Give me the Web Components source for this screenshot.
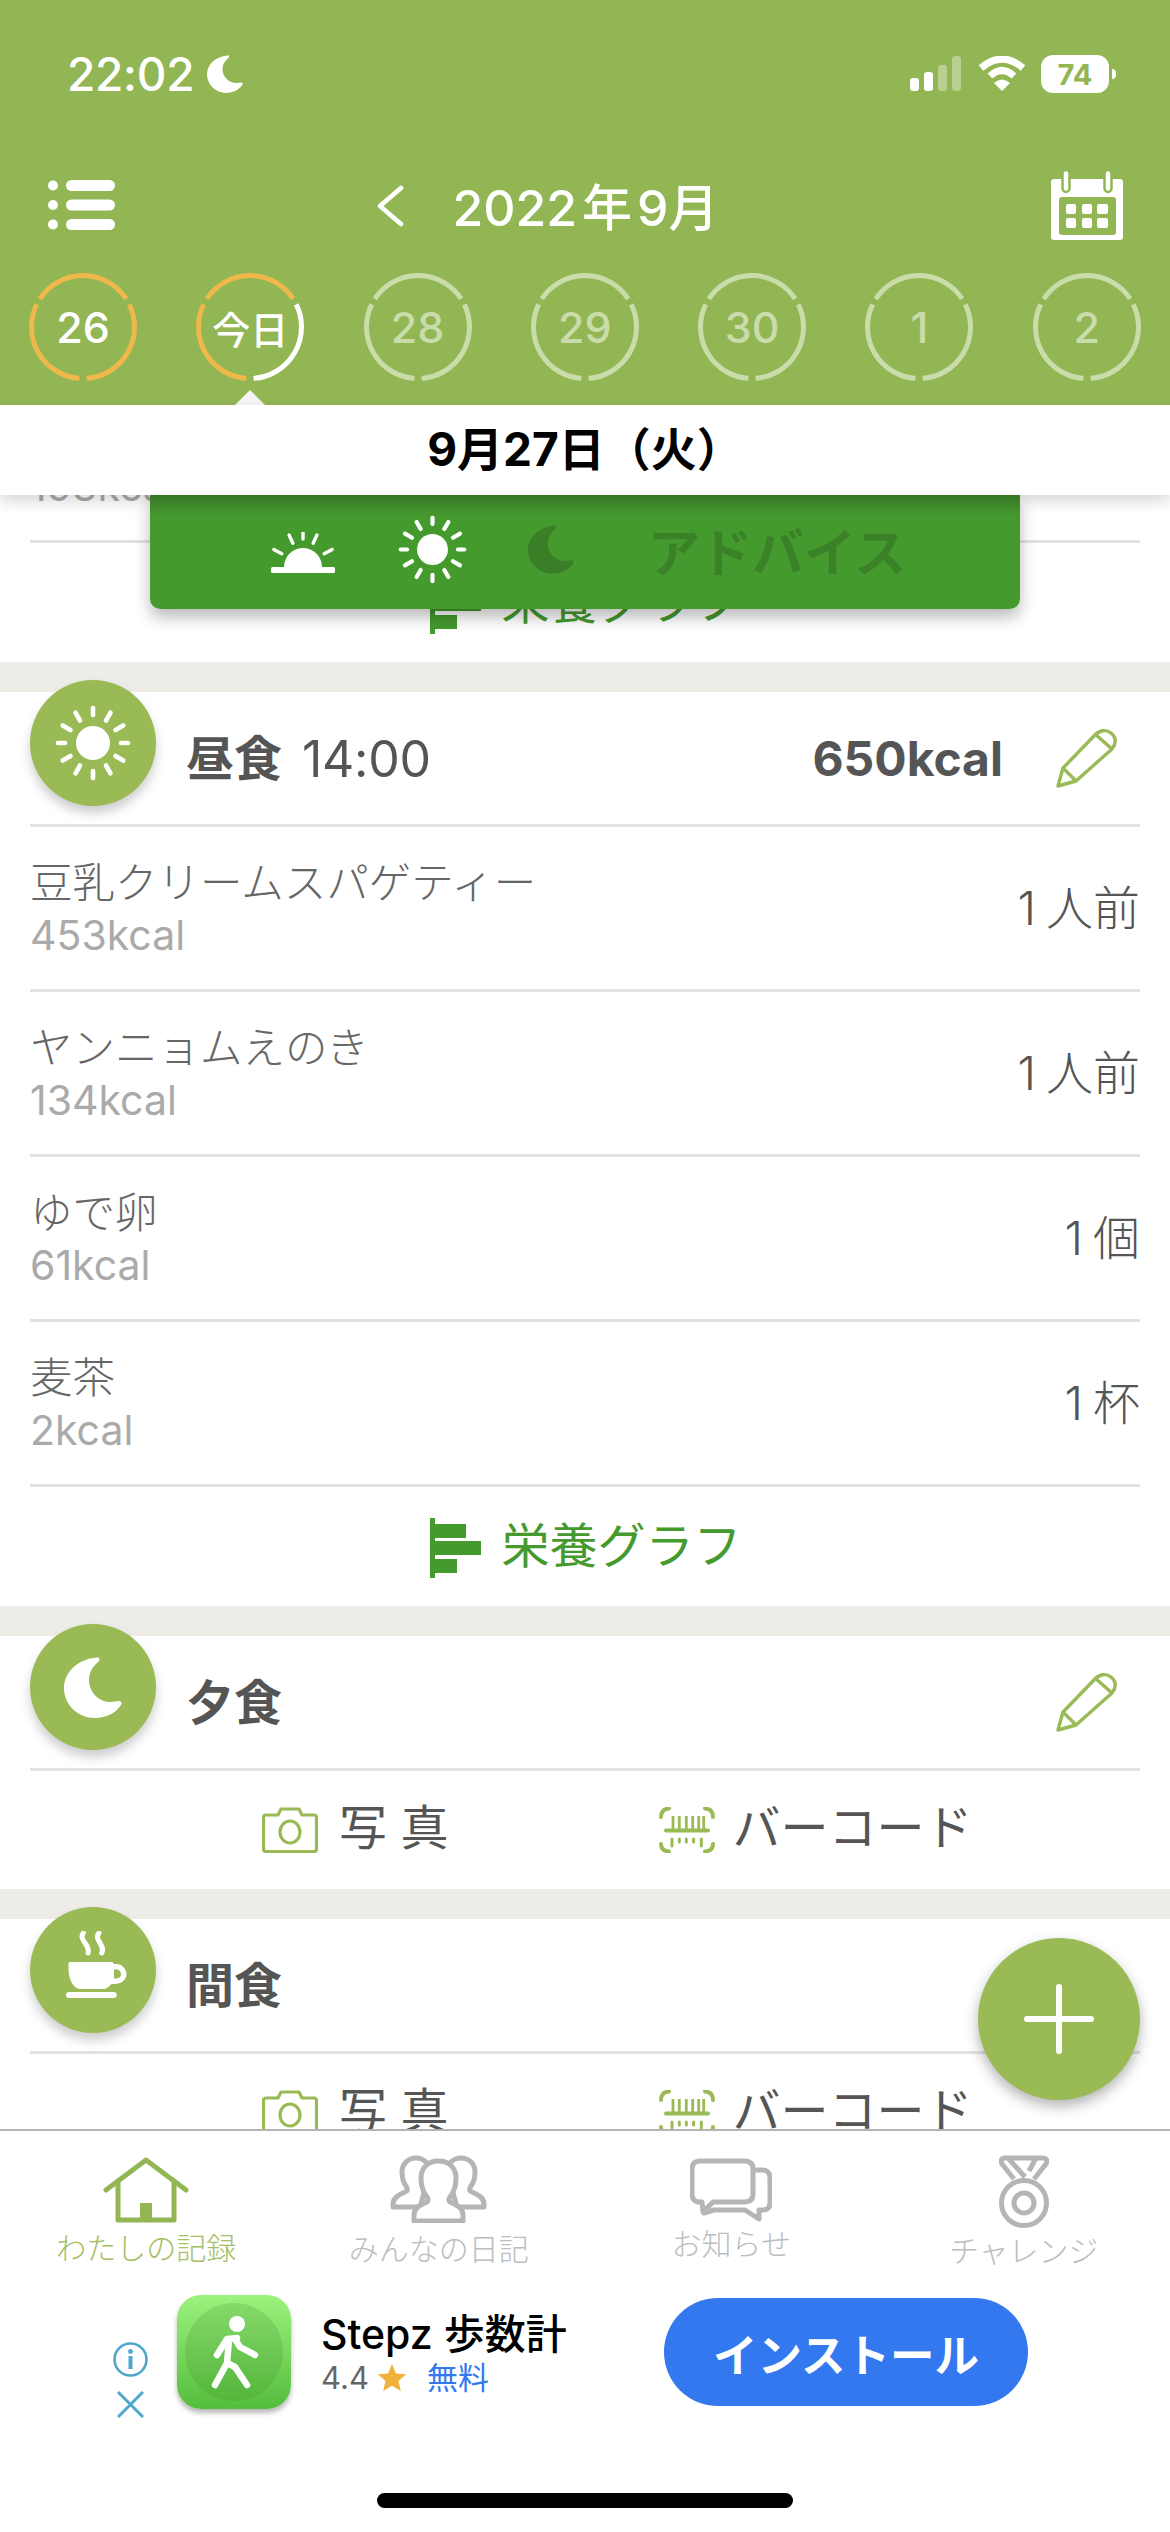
<!DOCTYPE html>
<html lang="ja">
<head>
<meta charset="utf-8">
<title>わたしの記録</title>
<style>
	html, body { margin: 0; padding: 0; }
	body {
		width: 1170px;
		height: 2532px;
		overflow: hidden;
		display: flex;
		flex-direction: column;
		background: #ffffff;
		font-family: Inter, "Noto Sans CJK JP", sans-serif;
		color: #555555;
	}
</style>
</head>
<body>
	<app-header></app-header>
	<date-bar>9月27日（火）</date-bar>
	<meal-view>
		<meal-section>
			<food-row name="" kcal="193kcal" qty=""></food-row>
			<nutrition-link></nutrition-link>
		</meal-section>
		<meal-section icon="sun" title-text="昼食" time="14:00" total="650kcal">
			<food-row name="豆乳クリームスパゲティー" kcal="453kcal" qty="1人前"></food-row>
			<food-row name="ヤンニョムえのき" kcal="134kcal" qty="1人前"></food-row>
			<food-row name="ゆで卵" kcal="61kcal" qty="1個"></food-row>
			<food-row name="麦茶" kcal="2kcal" qty="1杯"></food-row>
			<nutrition-link></nutrition-link>
		</meal-section>
		<meal-section icon="moon" title-text="夕食">
			<capture-row></capture-row>
		</meal-section>
		<meal-section icon="cup" title-text="間食" no-edit>
			<capture-row></capture-row>
		</meal-section>
	</meal-view>
	<tab-bar></tab-bar>
	<ad-banner></ad-banner>
	<home-indicator></home-indicator>

<script>
	const GREEN = '#9aba55';

	// rays round a centre, used by the sun and the sunrise
	function rays(angles, r1, r2, width, cx = 0, cy = 0) {
		return angles.map((a) => {
			const rad = a * Math.PI / 180;
			const r0 = a % 90 === 0 ? r1 + 2 : r1;
			return `<line x1="${cx + Math.sin(rad) * r0}" y1="${cy - Math.cos(rad) * r0}" x2="${cx + Math.sin(rad) * r2}" y2="${cy - Math.cos(rad) * r2}" stroke-width="${width}" stroke-linecap="round"/>`;
		}).join('');
	}

	const MOON_PATH = 'M33 0.500C35 0 37 3 34 5C28 10 25 16 25 23C25 35 35 45 46 45C49 45 52 44 55 44C58 44 58 47 57 48C52 56 42 61 31 61C14 61 0 48 0 31C0 15 14 2 33 0.500Z';
	const SUN_BODY = `<circle r="17" stroke="none"/>${rays([0, 30, 60, 90, 120, 150, 180, 210, 240, 270, 300, 330], 26, 35, 4.6)}`;

	const ICONS = {
		sun: `<svg viewBox="-38 -38 76 76" width="76" height="76" stroke="#fff" fill="#fff">${SUN_BODY}</svg>`,
		sunSmall: `<svg viewBox="-38 -38 76 76" width="69" height="69" stroke="#fff" fill="#fff">${SUN_BODY}</svg>`,
		sunrise: `<svg viewBox="0 0 66 42" width="66" height="42" stroke="#fff" fill="#fff"><path d="M14 35A19 19 0 0 1 52 35Z" stroke="none"/><rect x="1" y="35" width="64" height="6" rx="1.500" stroke="none"/>${rays([0, 25, -25, 62, -62], 24, 33, 3.4, 33, 33)}</svg>`,
		moon: `<svg viewBox="0 0 58 61" width="58" height="61"><path d="${MOON_PATH}" fill="#fff"/></svg>`,
		moonDark: `<svg viewBox="0 0 58 61" width="46" height="49"><path d="${MOON_PATH}" fill="#3a7f28"/></svg>`,
		cup: `<svg viewBox="0 0 61 67" width="61" height="67" fill="#fff" style="margin:-11px 0 0 7px"><path d="M17.300 2C12 9 25 14 22 22M33 2C27 9 40 14 35.700 22" fill="none" stroke="#fff" stroke-width="5" stroke-linecap="round"/><path fill-rule="evenodd" d="M4 31H46C47 31 47.500 32 47.500 33H50C56 33 60.500 38 60.500 43C60.500 49 55 53 49 53H45.500C43 56 40 58 37 58H14C8 58 2.500 49 2.500 38V32.500C2.500 31.500 3 31 4 31ZM48 38.500V47.500H50C53 47.500 55 45.500 55 43C55 40.500 53 38.500 50 38.500Z"/><rect x="0" y="61" width="50.700" height="6" rx="3"/></svg>`,
		pencil: `<svg viewBox="0 0 62 60" width="62" height="60" fill="none" stroke="${GREEN}" stroke-width="3.400" stroke-linejoin="round"><path d="M7 40L38 8C43 2 50 1 55 5C60 9 61 15 56 21L20 53L2 58Z"/><path d="M7 40L20 53M39 6L56 21"/></svg>`,
		camera: `<svg viewBox="0 0 56 46" width="56" height="46" fill="none" stroke="${GREEN}" stroke-width="3.200" stroke-linejoin="round"><path d="M4 8H16L19 2H37L40 8H52C53.500 8 54.500 9 54.500 10.500V42C54.500 43.500 53.500 44.500 52 44.500H4C2.500 44.500 1.500 43.500 1.500 42V10.500C1.500 9 2.500 8 4 8Z"/><ellipse cx="28" cy="25" rx="10" ry="11"/></svg>`,
		barcode: `<svg viewBox="0 0 56 46" width="56" height="46" fill="none" stroke="${GREEN}" stroke-linecap="round"><path d="M2 10Q2 2 10 1.500M46 1.500Q54 2 54 10M2 37Q2 44 10 44.500M54 37Q54 44 46 44.500" stroke-width="4"/><path d="M14 9V22M20.300 9V22M27.300 9V22M33.700 9V22M39.700 9V22M44.700 9V22" stroke-width="2.800" stroke-linecap="butt"/><rect x="5" y="21.500" width="46" height="4" rx="2" fill="${GREEN}" stroke="none"/><path d="M13 32V39M42.300 32V39M20.300 32V35M27.300 32V35M34.600 32V35" stroke-width="3"/></svg>`,
		graph: `<svg viewBox="0 0 51 60" width="51" height="60" fill="#459a2e"><rect width="5" height="60"/><rect x="5" y="6" width="31" height="14"/><rect x="5" y="23" width="46" height="14"/><rect x="5" y="41" width="22" height="14"/></svg>`,
		list: `<svg viewBox="0 0 67 50" width="67" height="50" fill="#fff"><circle cx="5" cy="5.500" r="5"/><circle cx="5" cy="25" r="5"/><circle cx="5" cy="44.500" r="5"/><rect x="18" y="0" width="49" height="11" rx="5.500"/><rect x="18" y="19.500" width="49" height="11" rx="5.500"/><rect x="18" y="39" width="49" height="11" rx="5.500"/></svg>`,
		chevron: `<svg viewBox="0 0 28 42" width="28" height="42" fill="none" stroke="#fff" stroke-width="4.600" stroke-linecap="round" stroke-linejoin="round"><path d="M25 3L4 21L25 39"/></svg>`,
		calendar: `<svg viewBox="0 0 72 69" width="72" height="69"><path d="M3 8H69C71 8 72 9 72 11V66C72 68 71 69 69 69H3C1 69 0 68 0 66V11C0 9 1 8 3 8Z" fill="#fff"/><rect x="8" y="26" width="57" height="38" rx="3" fill="#93b655"/><g fill="#fff"><rect x="15" y="33" width="10" height="10" rx="2"/><rect x="31" y="33" width="10" height="10" rx="2"/><rect x="46" y="33" width="11" height="10" rx="2"/><rect x="15" y="47" width="10" height="10" rx="2"/><rect x="31" y="47" width="10" height="10" rx="2"/><rect x="46" y="47" width="11" height="10" rx="2"/></g><g fill="#fff" stroke="#93b655" stroke-width="2.500"><rect x="11.500" y="-1" width="7" height="22" rx="3.500"/><rect x="53.500" y="-1" width="7" height="22" rx="3.500"/></g></svg>`,
		home: `<svg viewBox="0 0 86 66" width="86" height="66" fill="none" stroke="#93b655" stroke-width="5" stroke-linecap="round" stroke-linejoin="round"><path d="M3 33L43 3L83 33"/><path d="M15 24V63H71V24"/><rect x="37" y="46" width="12" height="18" fill="#93b655" stroke="none"/></svg>`,
		people: `<svg viewBox="0 0 97 68" width="97" height="68" fill="#fff" stroke="#b5b5b5" stroke-width="5" stroke-linejoin="round"><path d="M3 52V49C3 43 8 40 15 37C18 36 18 34 16 31C13 27 12 23 12 17C12 9 18 3 26 3C34 3 40 9 40 17C40 23 39 27 36 31L30 52Z"/><path d="M94 52V49C94 43 89 40 82 37C79 36 79 34 81 31C84 27 85 23 85 17C85 9 79 3 71 3C63 3 57 9 57 17C57 23 58 27 61 31L67 52Z"/><path d="M24 66V60C24 54 30 50 35 48C38 47 39 45 37 42C33 37 31 31 31 23C31 13 38 6 48.500 6C59 6 66 13 66 23C66 31 64 37 60 42C58 45 59 47 62 48C67 50 73 54 73 60V66Z"/></svg>`,
		chat: `<svg viewBox="0 0 82 64" width="82" height="64" fill="none" stroke="#b5b5b5" stroke-width="5" stroke-linejoin="round" stroke-linecap="round"><path d="M62 12H72C77 12 80 15 80 20V45C80 50 77 52 72 52H69L69 61L55 52H24L14 55"/><path d="M10 3H54C60 3 63 6 63 11V36C63 41 60 44 54 44H23L13 54L12 44H10C5 44 2 41 2 36V11C2 6 5 3 10 3Z" fill="#fff"/></svg>`,
		medal: `<svg viewBox="0 0 50 73" width="50" height="73" fill="none" stroke="#b5b5b5" stroke-width="5" stroke-linejoin="round"><path d="M15 24L3 9C1 5 3 3 6 3H44C47 3 49 5 47 9L35 24"/><path d="M9 3L26 22M30 16L37 3"/><circle cx="25" cy="48" r="22.500"/><circle cx="25" cy="48" r="10"/></svg>`,
		walker: `<svg viewBox="0 0 114 114" width="114" height="114"><defs><linearGradient id="bg" x1="0" y1="0" x2="0" y2="1"><stop offset="0" stop-color="#9df27d"/><stop offset="1" stop-color="#54bd3c"/></linearGradient><linearGradient id="disc" x1="0" y1="0" x2="0" y2="1"><stop offset="0" stop-color="#86d96a"/><stop offset="1" stop-color="#54b53c"/></linearGradient></defs><rect width="114" height="114" rx="24" fill="url(#bg)"/><circle cx="57" cy="57" r="49" fill="url(#disc)"/><circle cx="60" cy="29" r="8" fill="#fff"/><path d="M60 43L50 44L40 60M58 44L63 52L78 60M52 45L50 68L38 90M50 68L58 72L70 90" fill="none" stroke="#fff" stroke-width="6.500" stroke-linecap="round" stroke-linejoin="round"/></svg>`,
		info: `<svg viewBox="0 0 35 35" width="35" height="35" fill="none" stroke="#4fa8cb" stroke-width="2.600"><circle cx="17.500" cy="17.500" r="16"/><circle cx="17.500" cy="9.500" r="2.400" fill="#4fa8cb" stroke="none"/><rect x="15.500" y="14" width="4" height="13" fill="#4fa8cb" stroke="none"/></svg>`,
		close: `<svg viewBox="0 0 27 27" width="27" height="27" stroke="#4fa8cb" stroke-width="3"><path d="M1 1L26 26M26 1L1 26"/></svg>`,
		star: `<svg viewBox="0 0 28 27" width="28" height="27"><path d="M14 0L18 9.500L28 10.300L20.500 17L22.800 27L14 21.700L5.200 27L7.500 17L0 10.300L10 9.500Z" fill="#efb23c"/></svg>`
	};

	class AppIcon extends HTMLElement {
		constructor() {
			super();
			this.attachShadow({ mode: 'open' });
		}

		connectedCallback() {
			this.shadowRoot.innerHTML = `
				<style>
					:host { display: inline-flex; flex: none; line-height: 0; }
				</style>
				${ICONS[this.getAttribute('name')]}
			`;
		}
	}

	class AppHeader extends HTMLElement {
		constructor() {
			super();
			this.attachShadow({ mode: 'open' });
			this.shadowRoot.innerHTML = `
				<style>
					:host {
						display: block;
						height: 405px;
						flex: none;
						background: #93b655;
						color: #fff;
						position: relative;
					}
					.status {
						display: flex;
						align-items: center;
						justify-content: space-between;
						height: 50px;
						padding: 49px 55px 0 67px;
					}
					.time {
						display: flex;
						align-items: center;
						gap: 13px;
						font-size: 46px;
						font-weight: 500;
						letter-spacing: -0.300px;
					}
					.indicators { display: flex; align-items: center; margin-right: -1px; }
					.nav {
						display: grid;
						grid-template-columns: 1fr auto 1fr;
						align-items: center;
						height: 80px;
						margin-top: 66px;
						padding: 0 47px 0 48px;
					}
					.nav .cal { justify-self: end; }
					.title {
						display: flex;
						align-items: center;
						font-size: 50px;
						line-height: 60px;
						font-weight: 500;
						padding-top: 5px;
					}
					.title app-icon { margin-left: -76px; margin-right: 48px; margin-top: -4px; }
					.gap { margin: 0 5px; }
					.battery {
						width: 68px;
						height: 38px;
						border-radius: 12px;
						background: #fff;
						color: #93b655;
						font-size: 29px;
						font-weight: 700;
						display: flex;
						align-items: center;
						justify-content: center;
						margin-left: 15px;
					}
					.nub { width: 4px; height: 10px; margin-left: 3px; background: #fff; border-radius: 0 5px 5px 0; }
				</style>
				<div class="status">
					<div class="time">22:02 <svg viewBox="0 0 58 61" width="36" height="38"><path d="${MOON_PATH}" fill="#fff"/></svg></div>
					<div class="indicators">
						<svg viewBox="0 0 116 36" width="116" height="36">
							<rect x="0" y="22" width="9" height="13" rx="3" fill="#fff"/>
							<rect x="14" y="16" width="9" height="19" rx="3" fill="#fff"/>
							<rect x="28" y="9" width="9" height="26" rx="3" fill="#fff" opacity=".35"/>
							<rect x="42" y="0" width="9" height="35" rx="3" fill="#fff" opacity=".35"/>
							<path d="M71 12Q92 -6 113 12M80 20Q92 9 104 20" fill="none" stroke="#fff" stroke-width="7"/>
							<path d="M84 27Q92 20 100 27L92 35Z" fill="#fff"/>
						</svg>
						<div class="battery">74</div>
						<div class="nub"></div>
					</div>
				</div>
				<div class="nav">
					<app-icon name="list"></app-icon>
					<div class="title"><app-icon name="chevron"></app-icon>2022<span class="gap">年</span>9月</div>
					<app-icon class="cal" name="calendar"></app-icon>
				</div>
				<day-strip></day-strip>
			`;
		}
	}

	class DayStrip extends HTMLElement {
		constructor() {
			super();
			this.attachShadow({ mode: 'open' });
			const O = '#efb84a', W = '#ffffff', D = '#cadcaa';
			const days = [
				['26', O, O, O, false],
				['今日', O, W, O, true],
				['28', D, D, D, false],
				['29', D, D, D, false],
				['30', D, D, D, false],
				['1', D, D, D, false],
				['2', D, D, D, false]
			];
			this.shadowRoot.innerHTML = `
				<style>
					:host {
						display: flex;
						gap: 59.300px;
						margin-top: 28px;
						padding-left: 29px;
					}
				</style>
				${days.map((d) => `<day-ring label="${d[0]}" top="${d[1]}" right="${d[2]}" left="${d[3]}" ${d[4] ? 'selected' : ''} ${d[1] === D ? 'dim' : ''}></day-ring>`).join('')}
			`;
		}
	}

	class DayRing extends HTMLElement {
		constructor() {
			super();
			this.attachShadow({ mode: 'open' });
		}

		arc(from, to, colour) {
			const r = 51.500;
			const pt = (a) => {
				const rad = a * Math.PI / 180;
				return `${54 + Math.sin(rad) * r} ${54 - Math.cos(rad) * r}`;
			};
			return `<path d="M${pt(from)}A${r} ${r} 0 0 1 ${pt(to)}" fill="none" stroke="${colour}" stroke-width="5"/>`;
		}

		connectedCallback() {
			const dim = this.hasAttribute('dim');
			const selected = this.hasAttribute('selected');
			this.shadowRoot.innerHTML = `
				<style>
					:host {
						display: grid;
						place-items: center;
						width: 108px;
						height: 108px;
						flex: none;
						position: relative;
						font-size: ${selected ? 38 : 43}px;
						font-weight: 500;
						color: ${dim ? '#cadcaa' : '#ffffff'};
					}
					svg { position: absolute; inset: 0; }
					.pointer {
						position: absolute;
						left: 39px;
						bottom: -24px;
						width: 0;
						height: 0;
						border-left: 15px solid transparent;
						border-right: 15px solid transparent;
						border-bottom: 15px solid #f6f6f6;
					}
				</style>
				<svg viewBox="0 0 108 108" width="108" height="108">
					${this.arc(-57, 57, this.getAttribute('top'))}
					${this.arc(64, 176, this.getAttribute('right'))}
					${this.arc(184, 296, this.getAttribute('left'))}
				</svg>
				<span>${this.getAttribute('label')}</span>
				${selected ? '<div class="pointer"></div>' : ''}
			`;
		}
	}

	class DateBar extends HTMLElement {
		constructor() {
			super();
			this.attachShadow({ mode: 'open' });
			this.shadowRoot.innerHTML = `
				<style>
					:host {
						display: flex;
						align-items: center;
						justify-content: center;
						height: 90px;
						flex: none;
						box-sizing: border-box;
						padding-bottom: 8px;
						background: #fff;
						color: #000;
						font-size: 46px;
						font-weight: 700;
						box-shadow: 0 6px 14px rgba(0, 0, 0, 0.16);
						position: relative;
						z-index: 3;
					}
				</style>
				<slot></slot>
			`;
		}
	}

	class MealView extends HTMLElement {
		constructor() {
			super();
			this.attachShadow({ mode: 'open' });
			this.shadowRoot.innerHTML = `
				<style>
					:host {
						display: block;
						height: 1634px;
						flex: none;
						position: relative;
						overflow: hidden;
						background: #eeece6;
					}
					/* the list is scrolled, its first section runs under the date bar */
					.list { display: flex; flex-direction: column; gap: 30px; margin-top: -117px; }
					.advice {
						position: absolute;
						top: 0;
						left: 150px;
						width: 870px;
						height: 114px;
						box-sizing: border-box;
						display: flex;
						align-items: center;
						padding-left: 120px;
						background: linear-gradient(#3f862a 0, #459a2e 22px);
						border-radius: 0 0 10px 10px;
						box-shadow: 0 8px 16px rgba(0, 0, 0, 0.28);
						z-index: 2;
					}
					.advice .sunrise { margin-top: 2px; }
					.advice .sun { margin-left: 62px; margin-top: -6px; }
					.advice .moon { margin-left: 61px; margin-top: -6px; }
					.advice span {
						margin-left: 74px;
						margin-top: -6px;
						font-size: 52px;
						font-weight: 700;
						color: #3b8128;
						white-space: nowrap;
					}
					.fab {
						position: absolute;
						left: 978px;
						top: 1443px;
						width: 162px;
						height: 162px;
						border-radius: 50%;
						background: ${GREEN};
						box-shadow: 0 6px 14px rgba(0, 0, 0, 0.3);
						z-index: 2;
						display: grid;
						place-items: center;
					}
				</style>
				<div class="list"><slot></slot></div>
				<div class="advice">
					<app-icon class="sunrise" name="sunrise"></app-icon>
					<app-icon class="sun" name="sunSmall"></app-icon>
					<app-icon class="moon" name="moonDark"></app-icon>
					<span>アドバイス</span>
				</div>
				<div class="fab">
					<svg viewBox="0 0 70 70" width="70" height="70" fill="#fff"><rect x="32" y="0" width="6" height="70" rx="3"/><rect x="0" y="32" width="70" height="6" rx="3"/></svg>
				</div>
			`;
		}
	}

	class MealSection extends HTMLElement {
		constructor() {
			super();
			this.attachShadow({ mode: 'open' });
		}

		connectedCallback() {
			const icon = this.getAttribute('icon');
			const time = this.getAttribute('time');
			const total = this.getAttribute('total');
			const head = icon ? `
				<div class="head">
					<div class="avatar"><app-icon name="${icon}"></app-icon></div>
					<div class="name">${this.getAttribute('title-text')}</div>
					${time ? `<div class="time">${time}</div>` : ''}
					<div class="total">${total || ''}</div>
					${this.hasAttribute('no-edit') ? '' : '<app-icon class="edit" name="pencil"></app-icon>'}
				</div>
			` : '';
			this.shadowRoot.innerHTML = `
				<style>
					:host { display: block; background: #fff; position: relative; }
					.head {
						display: flex;
						align-items: center;
						box-sizing: border-box;
						height: 135px;
						margin: 0 30px;
						padding-top: 2px;
						border-bottom: 3px solid #e2e2e2;
						color: #555;
					}
					.avatar {
						width: 126px;
						height: 126px;
						flex: none;
						align-self: flex-start;
						margin-top: -14px;
						border-radius: 50%;
						background: ${GREEN};
						box-shadow: 0 7px 11px rgba(0, 0, 0, 0.2);
						display: grid;
						place-items: center;
					}
					.name { margin-left: 30px; font-size: 48px; line-height: 60px; font-weight: 700; }
					.time { margin-left: 20px; font-size: 50px; line-height: 60px; font-weight: 400; letter-spacing: -0.300px; }
					.total { margin-left: auto; font-size: 48px; line-height: 60px; font-weight: 700; }
					.edit { margin-left: 53px; margin-right: 22px; margin-top: -2px; }
				</style>
				${head}
				<slot></slot>
			`;
		}
	}

	class FoodRow extends HTMLElement {
		constructor() {
			super();
			this.attachShadow({ mode: 'open' });
		}

		connectedCallback() {
			const qty = this.getAttribute('qty');
			this.shadowRoot.innerHTML = `
				<style>
					:host {
						display: flex;
						justify-content: space-between;
						align-items: center;
						box-sizing: border-box;
						height: 165px;
						margin: 0 30px;
						border-bottom: 3px solid #e2e2e2;
					}
					.name { font-size: 42.500px; line-height: 56px; min-height: 56px; margin-top: -2px; color: #666; font-weight: 300; white-space: nowrap; }
					.kcal { font-size: 41px; line-height: 50px; color: #aaa; margin-top: -1px; }
					.qty { font-size: 47px; line-height: 60px; color: #555; font-weight: 300; }
					.qty span { margin-right: 10px; }
				</style>
				<div>
					<div class="name">${this.getAttribute('name')}</div>
					<div class="kcal">${this.getAttribute('kcal')}</div>
				</div>
				<div class="qty"><span>${qty.slice(0, 1)}</span>${qty.slice(1)}</div>
			`;
		}
	}

	class NutritionLink extends HTMLElement {
		constructor() {
			super();
			this.attachShadow({ mode: 'open' });
			this.shadowRoot.innerHTML = `
				<style>
					:host {
						display: flex;
						align-items: center;
						justify-content: center;
						gap: 20px;
						height: 119px;
						padding-left: 2px;
						font-size: 48px;
						color: #459a2e;
					}
					app-icon { margin-top: 3px; }
					span { line-height: 60px; margin-top: -2px; }
				</style>
				<app-icon name="graph"></app-icon>
				<span>栄養グラフ</span>
			`;
		}
	}

	class CaptureRow extends HTMLElement {
		constructor() {
			super();
			this.attachShadow({ mode: 'open' });
			this.shadowRoot.innerHTML = `
				<style>
					:host {
						display: flex;
						align-items: center;
						height: 118px;
						padding-left: 262px;
						font-size: 48px;
						color: #555;
					}
					.item { display: flex; align-items: center; gap: 21px; }
					.item + .item { margin-left: 210px; gap: 18px; }
					span { line-height: 60px; margin-top: -4px; }
				</style>
				<div class="item"><app-icon name="camera"></app-icon><span>写 真</span></div>
				<div class="item"><app-icon name="barcode"></app-icon><span>バーコード</span></div>
			`;
		}
	}

	class TabBar extends HTMLElement {
		constructor() {
			super();
			this.attachShadow({ mode: 'open' });
			const tabs = [
				['home', 'わたしの記録', 26, 65, 11, true],
				['people', 'みんなの日記', 24, 68, 11, false],
				['chat', 'お知らせ', 27, 64, 7, false],
				['medal', 'チャレンジ', 24, 73, 8, false]
			];
			this.shadowRoot.innerHTML = `
				<style>
					:host {
						display: grid;
						grid-template-columns: repeat(4, 1fr);
						height: 155px;
						flex: none;
						border-top: 2px solid #b4b4b4;
						background: #fff;
						position: relative;
						z-index: 1;
					}
					.tab { display: flex; flex-direction: column; align-items: center; font-size: 30px; line-height: 30px; color: #bdbdbd; font-weight: 300; }
					.tab.on { color: #a3c064; }
					.tab app-icon { display: flex; }
				</style>
				${tabs.map((t) => `
					<div class="tab ${t[5] ? 'on' : ''}" style="padding-top:${t[2]}px">
						<app-icon name="${t[0]}" style="height:${t[3]}px"></app-icon>
						<span style="margin-top:${t[4]}px">${t[1]}</span>
					</div>
				`).join('')}
			`;
		}
	}

	class AdBanner extends HTMLElement {
		constructor() {
			super();
			this.attachShadow({ mode: 'open' });
			this.shadowRoot.innerHTML = `
				<style>
					:host {
						display: flex;
						align-items: center;
						height: 132px;
						flex: none;
						padding-left: 113px;
						background: #fff;
					}
					.side {
						display: flex;
						flex-direction: column;
						align-items: center;
						gap: 14px;
						align-self: flex-end;
						margin-right: 29px;
					}
					.logo { border-radius: 24px; box-shadow: 0 4px 5px rgba(0, 0, 0, 0.28); }
					.info { margin-left: 30px; width: 343px; }
					.app { font-size: 41px; font-weight: 500; line-height: 50px; color: #000; white-space: nowrap; }
					.meta { display: flex; align-items: center; font-size: 31px; line-height: 36px; color: #666; margin-top: 1px; }
					.meta app-icon { margin-left: 9px; }
					.free { margin-left: 21px; color: #3478f0; }
					.install {
						width: 364px;
						height: 108px;
						border-radius: 54px;
						background: #3478f0;
						color: #fff;
						font-size: 44.500px;
						font-weight: 700;
						display: grid;
						place-items: center;
					}
				</style>
				<div class="side">
					<app-icon name="info"></app-icon>
					<app-icon name="close"></app-icon>
				</div>
				<app-icon class="logo" name="walker"></app-icon>
				<div class="info">
					<div class="app">Stepz 歩数計</div>
					<div class="meta">4.4<app-icon name="star"></app-icon><span class="free">無料</span></div>
				</div>
				<div class="install">インストール</div>
			`;
		}
	}

	class HomeIndicator extends HTMLElement {
		constructor() {
			super();
			this.attachShadow({ mode: 'open' });
			this.shadowRoot.innerHTML = `
				<style>
					:host {
						display: block;
						width: 416px;
						height: 15px;
						flex: none;
						margin: 75px auto 0;
						border-radius: 8px;
						background: #000;
					}
				</style>
			`;
		}
	}

	customElements.define('app-icon', AppIcon);
	customElements.define('app-header', AppHeader);
	customElements.define('day-strip', DayStrip);
	customElements.define('day-ring', DayRing);
	customElements.define('date-bar', DateBar);
	customElements.define('meal-view', MealView);
	customElements.define('meal-section', MealSection);
	customElements.define('food-row', FoodRow);
	customElements.define('nutrition-link', NutritionLink);
	customElements.define('capture-row', CaptureRow);
	customElements.define('tab-bar', TabBar);
	customElements.define('ad-banner', AdBanner);
	customElements.define('home-indicator', HomeIndicator);
</script>
</body>
</html>
